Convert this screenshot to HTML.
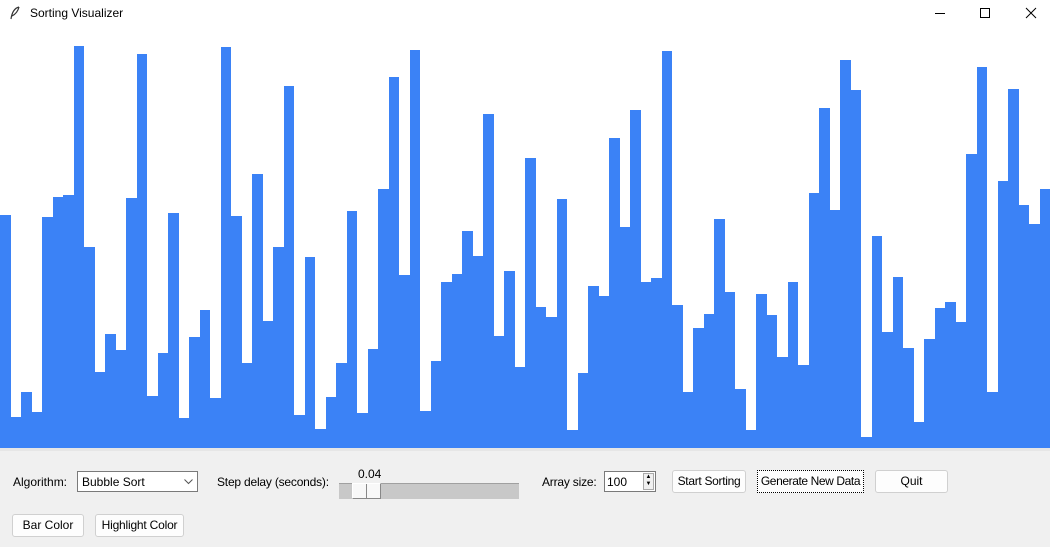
<!DOCTYPE html>
<html><head><meta charset="utf-8"><style>
*{margin:0;padding:0;box-sizing:border-box}
body{width:1050px;height:547px;background:#f0f0f0;font-family:"Liberation Sans",sans-serif;font-size:12px;color:#000;position:relative;overflow:hidden}
.title{position:absolute;left:0;top:0;width:1050px;height:28px;background:#fff}
.title span{position:absolute;left:30px;top:6px;font-size:12px}
.chart{position:absolute;left:0;top:28px;width:1050px;height:420px;background:#fff;display:flex;align-items:flex-end}
.chart div{flex:1;background:#3b82f6}
.sep{position:absolute;left:0;top:448px;width:1050px;height:3px;background:#e6e6e6}
.a{position:absolute;white-space:nowrap}
.btn{position:absolute;background:#fdfdfd;border:1px solid #d0d0d0;border-radius:3px;text-align:center;line-height:20px;white-space:nowrap;overflow:hidden}
</style></head><body>
<div class="title">
<svg style="position:absolute;left:9px;top:6px" width="12" height="14" viewBox="0 0 12 14"><path d="M10 1C6 2 3 6 2 13M10 1C9 5 7 8 3 10" stroke="#333" fill="none" stroke-width="1.2"/></svg>
<span>Sorting Visualizer</span>
<svg style="position:absolute;left:934px;top:7px" width="12" height="12"><path d="M1 6.5H11" stroke="#000"/></svg>
<svg style="position:absolute;left:979px;top:7px" width="12" height="12"><rect x="1.5" y="1.5" width="9" height="9" fill="none" stroke="#000"/></svg>
<svg style="position:absolute;left:1025px;top:7px" width="12" height="12"><path d="M1 1L11 11M11 1L1 11" stroke="#000"/></svg>
</div>
<div class="chart">
<div style="height:233px"></div><div style="height:31px"></div><div style="height:56px"></div><div style="height:36px"></div><div style="height:231px"></div><div style="height:251px"></div><div style="height:253px"></div><div style="height:402px"></div><div style="height:201px"></div><div style="height:76px"></div>
<div style="height:114px"></div><div style="height:98px"></div><div style="height:250px"></div><div style="height:394px"></div><div style="height:52px"></div><div style="height:95px"></div><div style="height:235px"></div><div style="height:30px"></div><div style="height:111px"></div><div style="height:138px"></div>
<div style="height:50px"></div><div style="height:401px"></div><div style="height:232px"></div><div style="height:85px"></div><div style="height:274px"></div><div style="height:127px"></div><div style="height:201px"></div><div style="height:362px"></div><div style="height:33px"></div><div style="height:191px"></div>
<div style="height:19px"></div><div style="height:51px"></div><div style="height:85px"></div><div style="height:237px"></div><div style="height:35px"></div><div style="height:99px"></div><div style="height:259px"></div><div style="height:371px"></div><div style="height:173px"></div><div style="height:398px"></div>
<div style="height:37px"></div><div style="height:87px"></div><div style="height:166px"></div><div style="height:174px"></div><div style="height:217px"></div><div style="height:192px"></div><div style="height:334px"></div><div style="height:112px"></div><div style="height:177px"></div><div style="height:81px"></div>
<div style="height:290px"></div><div style="height:141px"></div><div style="height:131px"></div><div style="height:249px"></div><div style="height:18px"></div><div style="height:75px"></div><div style="height:162px"></div><div style="height:152px"></div><div style="height:310px"></div><div style="height:221px"></div>
<div style="height:338px"></div><div style="height:166px"></div><div style="height:170px"></div><div style="height:397px"></div><div style="height:143px"></div><div style="height:56px"></div><div style="height:120px"></div><div style="height:134px"></div><div style="height:229px"></div><div style="height:156px"></div>
<div style="height:59px"></div><div style="height:18px"></div><div style="height:154px"></div><div style="height:133px"></div><div style="height:91px"></div><div style="height:166px"></div><div style="height:83px"></div><div style="height:255px"></div><div style="height:340px"></div><div style="height:238px"></div>
<div style="height:388px"></div><div style="height:358px"></div><div style="height:11px"></div><div style="height:212px"></div><div style="height:116px"></div><div style="height:171px"></div><div style="height:100px"></div><div style="height:26px"></div><div style="height:109px"></div><div style="height:140px"></div>
<div style="height:146px"></div><div style="height:126px"></div><div style="height:294px"></div><div style="height:381px"></div><div style="height:56px"></div><div style="height:267px"></div><div style="height:359px"></div><div style="height:243px"></div><div style="height:224px"></div><div style="height:259px"></div>
</div>
<div class="sep"></div>
<div class="a" style="left:13px;top:475px">Algorithm:</div>
<div class="a" style="left:77px;top:471px;width:121px;height:21px;background:#fff;border:1px solid #7a7a7a;padding:3px 4px">Bubble Sort</div>
<svg style="position:absolute;left:184px;top:479px" width="9" height="6"><path d="M0.5 0.5L4.5 4.5L8.5 0.5" stroke="#555" fill="none"/></svg>
<div class="a" style="left:217px;top:475px;letter-spacing:-0.2px">Step delay (seconds):</div>
<div class="a" style="left:358px;top:467px">0.04</div>
<div class="a" style="left:339px;top:483px;width:180px;height:16px;background:#c8c8c8;border-top:1px solid #a0a0a0"></div>
<div class="a" style="left:352px;top:483px;width:29px;height:16px;background:#f8f8f8;border:1px solid #888;border-top-color:#fff;border-left-color:#fff"></div>
<div class="a" style="left:366px;top:484px;width:1px;height:14px;background:#888"></div>
<div class="a" style="left:542px;top:475px;letter-spacing:-0.2px">Array size:</div>
<div class="a" style="left:604px;top:471px;width:52px;height:21px;background:#fff;border:1px solid #7a7a7a;padding:3px 2px">100</div>
<div class="a" style="left:643px;top:473px;width:11px;height:17px;border:1px solid #aaa;background:#f0f0f0;font-size:6px;line-height:7px;text-align:center">▲<br>▼</div>
<div class="btn" style="left:672px;top:470px;width:74px;height:23px;letter-spacing:-0.3px">Start Sorting</div>
<div class="btn" style="left:757px;top:470px;width:107px;height:23px;border:1px dotted #000;border-radius:0;letter-spacing:-0.4px">Generate New Data</div>
<div class="btn" style="left:875px;top:470px;width:73px;height:23px">Quit</div>
<div class="btn" style="left:12px;top:514px;width:72px;height:23px">Bar Color</div>
<div class="btn" style="left:95px;top:514px;width:89px;height:23px;letter-spacing:-0.2px">Highlight Color</div>
</body></html>
